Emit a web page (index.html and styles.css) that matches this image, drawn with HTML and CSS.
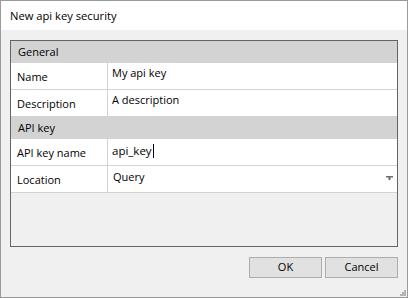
FILE: index.html
```html
<!DOCTYPE html>
<html>
<head>
<meta charset="utf-8">
<link rel="stylesheet" href="styles.css">
</head>
<body>
<div class="window">
  <div class="titlebar">New api key security</div>
  <div class="content">
    <div class="grid">
      <div class="section">General</div>
      <div class="row">
        <div class="label">Name</div>
        <div class="value">My api key</div>
      </div>
      <div class="row">
        <div class="label">Description</div>
        <div class="value">A description</div>
      </div>
      <div class="section">API key</div>
      <div class="row">
        <div class="label">API key name</div>
        <div class="value editing">api_key<span class="caret"></span></div>
      </div>
      <div class="row">
        <div class="label">Location</div>
        <div class="value combo">Query
          <svg class="arrow" width="7" height="4" viewBox="0 0 7 4"><path d="M0 0h7v1.5H4.5V4h-2V1.5H0z" fill="#6d6d6d"/></svg>
        </div>
      </div>
    </div>
    <div class="buttons">
      <div class="btn">OK</div>
      <div class="btn">Cancel</div>
    </div>
    <div class="grip">
      <svg width="6" height="6" viewBox="0 0 6 6" fill="#b4b4b4"><rect x="4" y="0" width="2" height="2"/><rect x="2" y="2" width="2" height="2"/><rect x="4" y="2" width="2" height="2"/><rect x="0" y="4" width="2" height="2"/><rect x="2" y="4" width="2" height="2"/><rect x="4" y="4" width="2" height="2"/></svg>
    </div>
  </div>
</div>
</body>
</html>
```
FILE: styles.css
```css
html, body {
  margin: 0;
  padding: 0;
}
body {
  font-family: "Open Sans", "Noto Sans", sans-serif;
  font-size: 11px;
  color: #000;
}
.window {
  width: 408px;
  height: 298px;
  box-sizing: border-box;
  border: 1px solid #9a9a9a;
  display: flex;
  flex-direction: column;
  background: #f0f0f0;
}
.titlebar {
  height: 29px;
  background: #fff;
  font-size: 11.2px;
  line-height: 29px;
  padding-left: 9px;
}
.content {
  flex: 1;
  padding: 10px 9px 0 9px;
  display: flex;
  flex-direction: column;
  position: relative;
}
.grid {
  height: 207px;
  box-sizing: border-box;
  border: 1px solid #646464;
  background: #f0f0f0;
}
.section {
  height: 22px;
  line-height: 21px;
  background: #d3d3d3;
  padding-left: 7px;
}
.row {
  height: 27px;
  box-sizing: border-box;
  border-bottom: 1px solid #d3d3d3;
  background: #fff;
  display: flex;
}
.label {
  width: 97px;
  box-sizing: border-box;
  border-right: 1px solid #d3d3d3;
  padding-left: 6px;
  display: flex;
  align-items: center;
  padding-top: 1px;
}
.value {
  flex: 1;
  padding-left: 4px;
  padding-top: 2px;
  line-height: 16px;
  position: relative;
  background: #fff;
}
.value.editing {
  font-size: 11.5px;
  padding-top: 4px;
}
.caret {
  display: inline-block;
  width: 1px;
  height: 14px;
  background: #000;
  vertical-align: -3px;
  margin-left: 1px;
}
.combo {
  padding-left: 5px;
  padding-top: 2px;
  line-height: 17px;
}
.arrow {
  position: absolute;
  right: 4px;
  top: 10px;
}
.buttons {
  display: flex;
  justify-content: flex-end;
  gap: 3px;
  margin-top: 10px;
}
.btn {
  width: 73px;
  height: 21px;
  box-sizing: border-box;
  border: 1px solid #adadad;
  background: #e1e1e1;
  text-align: center;
  line-height: 18px;
}
.grip {
  position: absolute;
  right: 1px;
  bottom: 1px;
  line-height: 0;
}
```
